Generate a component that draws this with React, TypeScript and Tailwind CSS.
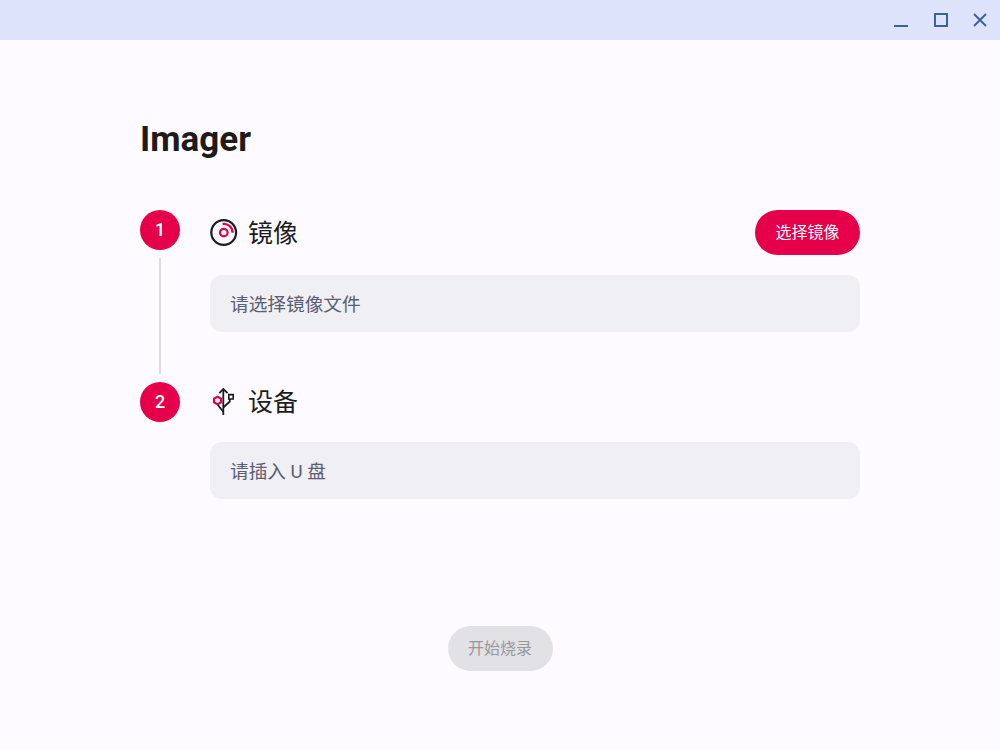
const cjk = "font-['Roboto','Noto_Sans_CJK_SC',sans-serif]";

function DiscIcon() {
  return (
    <svg width="28" height="28" viewBox="0 0 28 28" fill="none">
      <circle cx="13.7" cy="13.5" r="12.4" stroke="#1c1b1f" strokeWidth="2.2" />
      <circle cx="13.8" cy="13.6" r="3.8" stroke="#e6004c" strokeWidth="2.2" />
      <path d="M12.6 4.9a8.8 8.8 0 0 1 10 8.9" stroke="#e6004c" strokeWidth="2.2" />
    </svg>
  );
}

function UsbIcon() {
  return (
    <svg width="28" height="28" viewBox="0 0 28 28" fill="none">
      <path d="M13.3 1V27" stroke="#1c1b1f" strokeWidth="1.8" />
      <path d="M9.3 5.2 13.3 1l4.3 4.2" stroke="#1c1b1f" strokeWidth="1.8" />
      <path d="M13.3 19.5 19.8 13.5V11" stroke="#1c1b1f" strokeWidth="1.8" />
      <path d="M18.8 6.6h4.4V11h-4.4z" stroke="#1c1b1f" strokeWidth="1.6" />
      <path d="M13.3 23.7 7.5 16.5" stroke="#1c1b1f" strokeWidth="1.8" />
      <path d="M7.5 8.8 11 10.6v3.8L7.5 16.2 4 14.4v-3.8z" stroke="#e6004c" strokeWidth="2.2" />
    </svg>
  );
}

function StepHeader({ n, icon, label, action }: { n: number; icon: React.ReactNode; label: string; action?: React.ReactNode }) {
  return (
    <div className="flex items-start">
      <div className="flex h-10 w-10 shrink-0 items-center justify-center rounded-full bg-[#e6004c] text-lg font-medium text-white">
        {n}
      </div>
      <div className="ml-[30px] flex flex-1 items-center justify-between">
        <div className="flex h-10 items-center gap-[10px] self-center">
          {icon}
          <span className="pt-[2px] text-[25px] text-[#1c1b1f]">{label}</span>
        </div>
        {action}
      </div>
    </div>
  );
}

function InfoBox({ text }: { text: string }) {
  return (
    <div className="mt-5 ml-[70px] flex h-[57px] items-center rounded-xl bg-[#f0eff3] px-5 pt-[2px] text-[18.67px] text-[#5b5d72]">
      {text}
    </div>
  );
}

export default function App() {
  return (
    <div className={`flex h-[750px] w-[1000px] flex-col overflow-hidden bg-[#fdfbff] ${cjk}`}>
      <div className="flex h-10 items-center justify-end bg-[#dce3fb]">
        <div className="flex h-10 w-10 items-center justify-center">
          <div className="mt-[12px] ml-[1px] h-[2px] w-[14px] bg-[#3f5fa0]" />
        </div>
        <div className="flex h-10 w-10 items-center justify-center">
          <div className="ml-[1px] h-[14px] w-[14px] border-2 border-[#3f5fa0]" />
        </div>
        <div className="flex h-10 w-10 items-center justify-center">
          <svg width="14" height="14" viewBox="0 0 14 14" fill="none">
            <path d="M1 1l12 12M13 1 1 13" stroke="#3f5fa0" strokeWidth="2" />
          </svg>
        </div>
      </div>
      <div className="flex flex-1 flex-col px-[140px]">
        <h1 className="mt-[79px] text-[35px] leading-[42px] font-bold text-[#201a1b]">Imager</h1>
        <div className="mt-[49px]">
          <StepHeader
            n={1}
            icon={<DiscIcon />}
            label="镜像"
            action={
              <button className="flex h-[45px] w-[105px] items-center justify-center rounded-full bg-[#e6004c] text-base text-white">
                选择镜像
              </button>
            }
          />
          <InfoBox text="请选择镜像文件" />
        </div>
        <div className="relative mt-[50px]">
          <div className="absolute -top-[124px] left-[19px] h-[116px] w-[2px] bg-[#dcdbdf]" />
          <StepHeader n={2} icon={<UsbIcon />} label="设备" />
          <InfoBox text="请插入 U 盘" />
        </div>
        <div className="mt-[127px] flex justify-center">
          <button className="flex h-[45px] w-[105px] items-center justify-center rounded-full bg-[#e2e1e5] text-base text-[#98979c]">
            开始烧录
          </button>
        </div>
      </div>
    </div>
  );
}
